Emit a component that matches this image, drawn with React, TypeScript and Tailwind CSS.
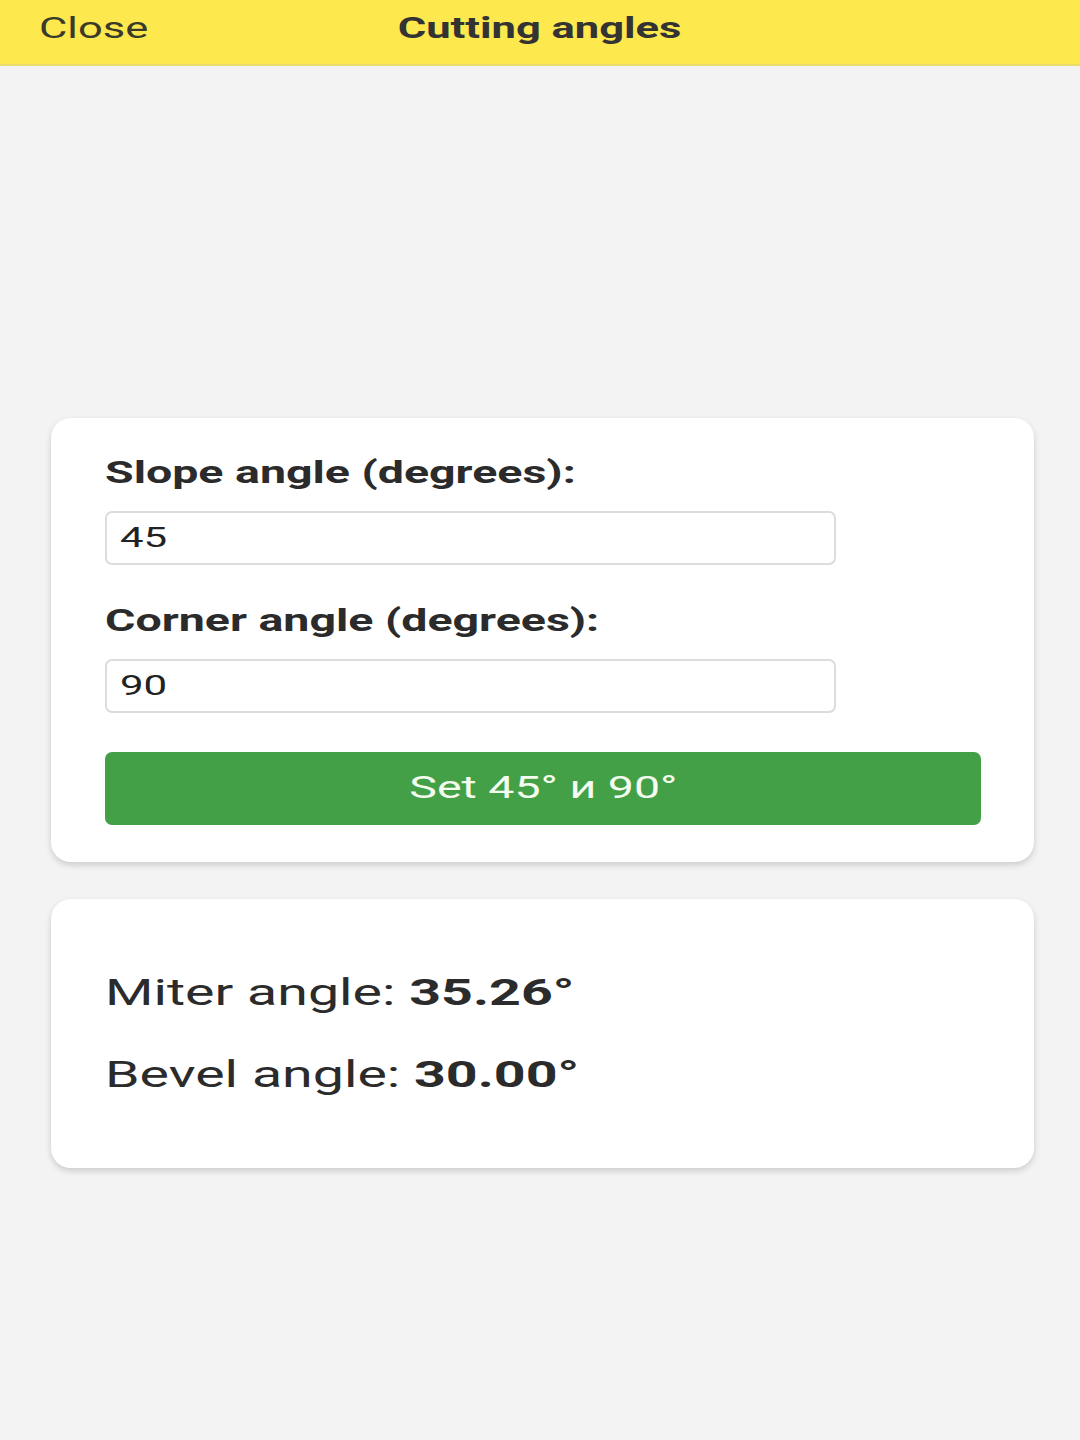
import { useState } from 'react'

const font = { fontFamily: 'Roboto, "Liberation Sans", sans-serif' }

// the source screen is a phone capture stretched to 1.5x its width, so glyphs are widened the same way
function Wide({ children, center }: { children: React.ReactNode; center?: boolean }) {
  return (
    <span className={center ? 'inline-block origin-center scale-x-150' : 'inline-block origin-left scale-x-150'}>
      {children}
    </span>
  )
}

function Field({ label, value, onChange }: { label: string; value: string; onChange: (v: string) => void }) {
  return (
    <div>
      <label className="block text-[31px] leading-[36px] font-bold text-[#2b2b2b]">
        <Wide>{label}</Wide>
      </label>
      <div className="mt-[20px] w-[731px] h-[54px] rounded-[7px] border-2 border-[#dcdcdc] bg-white px-[13px] flex items-center overflow-hidden">
        <input
          type="text"
          value={value}
          onChange={e => onChange(e.target.value)}
          className="w-[470px] origin-left scale-x-150 bg-transparent text-[28px] text-[#222] outline-none"
        />
      </div>
    </div>
  )
}

export default function App() {
  const [slope, setSlope] = useState('45')
  const [corner, setCorner] = useState('90')

  const s = (parseFloat(slope) * Math.PI) / 180
  const c = (parseFloat(corner) * Math.PI) / 180
  const miter = (Math.atan(Math.cos(s) * Math.tan(c / 2)) * 180) / Math.PI
  const bevel = (Math.asin(Math.sin(s) * Math.cos(c / 2)) * 180) / Math.PI
  const fmt = (n: number) => (isFinite(n) ? n.toFixed(2) : '—')

  return (
    <div style={font} className="min-h-screen bg-[#f3f3f3] pb-10">
      <header className="h-[66px] bg-[#fde84e] border-b-2 border-[#e9dc6a] grid grid-cols-[1fr_auto_1fr] items-start pt-[14px] text-[29px] leading-[28px] text-[#333]">
        <button className="justify-self-start self-start pl-[39px] leading-[28px] text-[#3a3a2a]">
          <Wide>Close</Wide>
        </button>
        <h1 className="font-bold">
          <Wide center>Cutting angles</Wide>
        </h1>
        <div />
      </header>

      <main className="ml-[51px] w-[983px]">
        <section className="mt-[352px] rounded-[20px] bg-white pl-[54px] pt-[37px] pb-[37px] shadow-[0_3px_6px_rgba(0,0,0,0.16)]">
          <Field label="Slope angle (degrees):" value={slope} onChange={setSlope} />
          <div className="mt-[38px]">
            <Field label="Corner angle (degrees):" value={corner} onChange={setCorner} />
          </div>
          <button
            onClick={() => { setSlope('45'); setCorner('90') }}
            className="mt-[39px] block w-[876px] h-[73px] rounded-[7px] bg-[#43a047] text-[31px] text-[#f4fbef]"
          >
            <Wide center>Set 45° и 90°</Wide>
          </button>
        </section>

        <section className="mt-[37px] rounded-[20px] bg-white pl-[54px] pt-[72px] pb-[71px] shadow-[0_3px_6px_rgba(0,0,0,0.16)] text-[37px] leading-[44px] text-[#2b2b2b]">
          <p><Wide>Miter angle: <b>{fmt(miter)}°</b></Wide></p>
          <p className="mt-[38px]"><Wide>Bevel angle: <b>{fmt(bevel)}°</b></Wide></p>
        </section>
      </main>
    </div>
  )
}
